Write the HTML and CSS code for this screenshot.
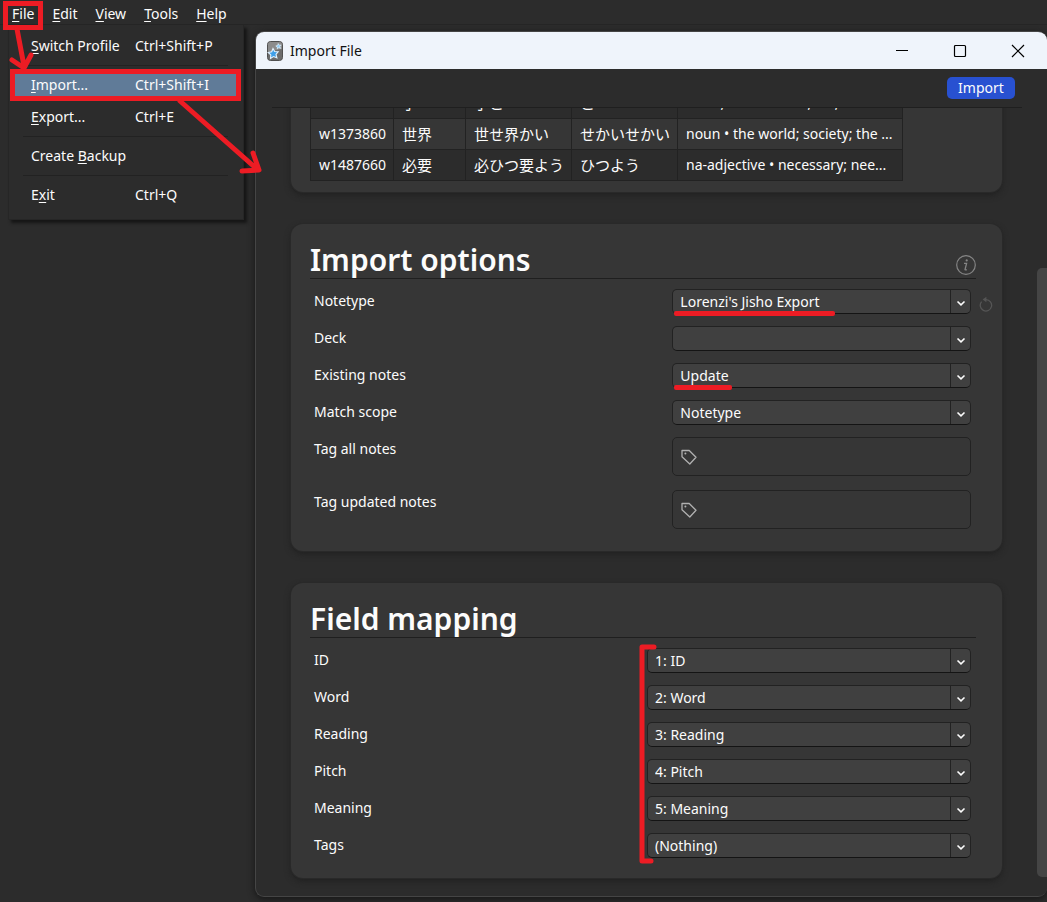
FILE: index.html
```html
<!DOCTYPE html>
<html lang="en">
<head>
<meta charset="utf-8">
<title>Import File</title>
<link rel="stylesheet" href="styles.css">
</head>
<body>
<svg class="defs" aria-hidden="true">
  <symbol id="chevron" viewBox="0 0 10 10"><path d="M1.5 3.5 5 6.8 8.500 3.500" fill="none" stroke="currentColor" stroke-width="1.6"/></symbol>
  <symbol id="tag" viewBox="0 0 16 16"><path d="M1 1.500h7.200L15 8.300 8.800 15 1 7.700z" fill="none" stroke="currentColor" stroke-width="1.300" stroke-linejoin="round"/><circle cx="4.400" cy="4.400" r="1" fill="currentColor"/></symbol>
</svg>

<nav class="menubar">
  <button class="menubar-item is-marked"><u>F</u>ile</button>
  <button class="menubar-item"><u>E</u>dit</button>
  <button class="menubar-item"><u>V</u>iew</button>
  <button class="menubar-item"><u>T</u>ools</button>
  <button class="menubar-item"><u>H</u>elp</button>
</nav>

<div class="file-menu" role="menu">
  <button class="menu-item" role="menuitem"><span><u>S</u>witch Profile</span><span>Ctrl+Shift+P</span></button>
  <hr class="menu-line">
  <button class="menu-item is-active" role="menuitem"><span><u>I</u>mport...</span><span>Ctrl+Shift+I</span></button>
  <button class="menu-item" role="menuitem"><span><u>E</u>xport...</span><span>Ctrl+E</span></button>
  <hr class="menu-line">
  <button class="menu-item" role="menuitem"><span>Create <u>B</u>ackup</span></button>
  <hr class="menu-line">
  <button class="menu-item" role="menuitem"><span>E<u>x</u>it</span><span>Ctrl+Q</span></button>
</div>

<main class="workspace">
  <section class="dialog">
    <header class="titlebar">
      <svg class="app-icon" viewBox="0 0 16 20" aria-hidden="true">
        <rect x=".5" y=".5" width="15" height="19" rx="3" fill="#6c6c6c" stroke="#505050"/>
        <path d="M1 10V3.500Q1 1 3.500 1h9Q15 1 15 3.500V8Q9 8.500 1 12z" fill="#8c8c8c"/>
        <path d="m6 7.500 1.700 3 3.500.2-2.200 2.700.9 3.400-3.400-1.300-3 1.900.3-3.500L1.200 11.500l3.500-.7z" fill="#3f9fe8" stroke="#e4f3ff" stroke-width="1.100"/>
        <path d="m11.200 2.600 1 1.600 1.900-.1-1.200 1.500.7 1.800-1.800-.7-1.500 1.200.1-1.900-1.600-1 1.900-.5z" fill="#8fccf7" stroke="#e4f3ff" stroke-width=".7"/>
      </svg>
      <span class="title">Import File</span>
      <button class="win-button" aria-label="Minimize"><svg viewBox="0 0 14 14"><path d="M1 6.500h12" stroke="#000"/></svg></button>
      <button class="win-button" aria-label="Maximize"><svg viewBox="0 0 14 14"><rect x="1.500" y="1.500" width="11" height="11" rx="1" fill="none" stroke="#000" stroke-width="1.200"/></svg></button>
      <button class="win-button" aria-label="Close"><svg viewBox="0 0 14 14"><path d="m1 1 12 12M13 1 1 13" stroke="#000" stroke-width="1.200"/></svg></button>
    </header>
    <div class="toolbar"><button class="import-button">Import</button></div>

    <div class="content">
      <section class="card preview">
        <table class="notes">
          <colgroup><col class="c-id"><col class="c-word"><col class="c-reading"><col class="c-reading"><col class="c-meaning"></colgroup>
          <tbody>
            <tr><td>w1307770</td><td lang="ja">子</td><td lang="ja">子こ</td><td lang="ja">こ</td><td>noun, suffix • child; kid; teena...</td></tr>
            <tr><td>w1373860</td><td lang="ja">世界</td><td lang="ja">世せ界かい</td><td lang="ja">せかいせかい</td><td>noun • the world; society; the ...</td></tr>
            <tr><td>w1487660</td><td lang="ja">必要</td><td lang="ja">必ひつ要よう</td><td lang="ja">ひつよう</td><td>na-adjective • necessary; nee...</td></tr>
          </tbody>
        </table>
      </section>

      <section class="card">
        <header class="card-head">
          <h1>Import options</h1>
          <button class="info" aria-label="Help"><svg viewBox="0 0 20 20"><circle cx="10" cy="10" r="9.300" fill="none" stroke="currentColor" stroke-width="1.200"/><path d="M8 8.300h2.600L9 14.500q0 .8 1.800.1" fill="none" stroke="currentColor" stroke-width="1.300"/><circle cx="10.700" cy="5.400" r="1.100" fill="currentColor"/></svg></button>
        </header>
        <div class="rows options">
          <div class="row"><label for="notetype">Notetype</label>
            <div class="picker"><select id="notetype"><option>Lorenzi's Jisho Export</option></select><svg class="chevron"><use href="#chevron"/></svg><i class="underline long"></i>
              <button class="revert" aria-label="Revert"><svg viewBox="0 0 14 16"><path d="M7 3.600A5.700 5.700 0 1 1 2.600 5.600" fill="none" stroke="currentColor" stroke-width="1.300"/><path d="M3.600 3.600 7.400.8v5.400z" fill="currentColor"/></svg></button></div></div>
          <div class="row"><label for="deck">Deck</label>
            <div class="picker"><select id="deck"><option></option></select><svg class="chevron"><use href="#chevron"/></svg></div></div>
          <div class="row"><label for="existing">Existing notes</label>
            <div class="picker"><select id="existing"><option>Update</option></select><svg class="chevron"><use href="#chevron"/></svg><i class="underline short"></i></div></div>
          <div class="row"><label for="scope">Match scope</label>
            <div class="picker"><select id="scope"><option>Notetype</option></select><svg class="chevron"><use href="#chevron"/></svg></div></div>
          <div class="row"><label for="tag-all">Tag all notes</label>
            <div class="tags"><svg><use href="#tag"/></svg><input id="tag-all" type="text"></div></div>
          <div class="row"><label for="tag-updated">Tag updated notes</label>
            <div class="tags"><svg><use href="#tag"/></svg><input id="tag-updated" type="text"></div></div>
        </div>
      </section>

      <section class="card">
        <header class="card-head"><h1>Field mapping</h1></header>
        <div class="rows mapping">
          <div class="row"><label for="f-id">ID</label>
            <div class="picker"><select id="f-id"><option>1: ID</option></select><svg class="chevron"><use href="#chevron"/></svg>
              <svg class="bracket" viewBox="0 0 18 220" aria-hidden="true"><path d="M15 3H3v214h9" fill="none" stroke="#ed1c24" stroke-width="5" stroke-linecap="round" stroke-linejoin="round"/></svg></div></div>
          <div class="row"><label for="f-word">Word</label>
            <div class="picker"><select id="f-word"><option>2: Word</option></select><svg class="chevron"><use href="#chevron"/></svg></div></div>
          <div class="row"><label for="f-reading">Reading</label>
            <div class="picker"><select id="f-reading"><option>3: Reading</option></select><svg class="chevron"><use href="#chevron"/></svg></div></div>
          <div class="row"><label for="f-pitch">Pitch</label>
            <div class="picker"><select id="f-pitch"><option>4: Pitch</option></select><svg class="chevron"><use href="#chevron"/></svg></div></div>
          <div class="row"><label for="f-meaning">Meaning</label>
            <div class="picker"><select id="f-meaning"><option>5: Meaning</option></select><svg class="chevron"><use href="#chevron"/></svg></div></div>
          <div class="row"><label for="f-tags">Tags</label>
            <div class="picker"><select id="f-tags"><option>(Nothing)</option></select><svg class="chevron"><use href="#chevron"/></svg></div></div>
        </div>
      </section>
      <div class="scroll-thumb"></div>
    </div>
  </section>
</main>

<svg class="arrows" viewBox="0 0 270 190" aria-hidden="true">
  <g fill="none" stroke="#ed1c24" stroke-width="5" stroke-linecap="round" stroke-linejoin="round">
    <path d="M17 29 24 66M12 60l12 8 7-13"/>
    <path d="M180 101 258 170M253 153l6 17-17 1"/>
  </g>
</svg>
</body>
</html>
```
FILE: styles.css
```css
* { box-sizing: border-box; }

body {
  margin: 0;
  min-height: 100vh;
  display: flex;
  flex-direction: column;
  background: #2c2c2c;
  color: #fcfcfc;
  font: 14px/20px "Noto Sans", "Noto Sans CJK JP", sans-serif;
}

button, input, select { font: inherit; color: inherit; }
button { border: 0; padding: 0; background: none; }
u { text-underline-offset: 2px; }
.defs { display: none; }

/* Main window menu */
.menubar {
  display: flex;
  gap: 18px;
  height: 25px;
  padding: 4px 12px 0;
  border-bottom: 1px solid #262626;
}
.menubar-item { position: relative; height: 20px; }
.menubar-item.is-marked::after {
  content: "";
  position: absolute;
  inset: -3px -9px -6px -9px;
  border: 5px solid #ed1c24;
  z-index: 3;
}

.file-menu {
  position: absolute;
  top: 25px;
  left: 8px;
  z-index: 2;
  width: 236px;
  padding: 5px 2px 8px 1px;
  background: #2c2c2c;
  border: solid #262626;
  border-width: 0 1px 1px;
  box-shadow: 3px 3px 3px #151515;
}
.menu-item {
  position: relative;
  display: grid;
  grid-template-columns: 104px 1fr;
  align-items: center;
  width: 100%;
  height: 32px;
  padding: 0 21px;
  text-align: left;
}
.menu-item.is-active { background: #607b98; }
.menu-item.is-active::after {
  content: "";
  position: absolute;
  inset: 0;
  border: 5px solid #ed1c24;
}
.menu-line { height: 1px; margin: 3px 13px; border: 0; background: #222; }

/* Dialog window */
.workspace {
  flex: 1;
  display: flex;
  padding: 6px 0 5px 255px;
}
.dialog {
  flex: 1;
  display: flex;
  flex-direction: column;
  overflow: hidden;
  background: #2c2c2c;
  border: solid #454545;
  border-width: 1px 0 1px 1px;
  border-radius: 9px;
  box-shadow: 0 2px 7px #161616;
}
.titlebar {
  display: flex;
  align-items: center;
  height: 37px;
  padding: 0 22px 0 11px;
  background: #eff4fb;
  color: #111;
}
.app-icon { width: 16px; height: 20px; margin-right: 7px; }
.title { flex: 1; }
.win-button { width: 14px; height: 14px; margin-left: 44px; }
.win-button svg { display: block; }

.toolbar {
  display: flex;
  justify-content: flex-end;
  align-items: center;
  height: 39px;
  margin: 0 25px 0 16px;
  padding-right: 7px;
  border-bottom: 1px solid #1f1f1f;
}
.import-button {
  width: 68px;
  height: 22px;
  border-radius: 5px;
  background: #2851d1;
}

.content {
  position: relative;
  flex: 1;
  display: flex;
  flex-direction: column;
  gap: 32px;
  overflow: hidden;
  padding: 0 45px 18px 35px;
}
.scroll-thumb {
  position: absolute;
  top: 160px;
  right: 0;
  bottom: 19px;
  width: 10px;
  border-radius: 5px 0 0 5px;
  background: #454545;
}

.card {
  background: #363636;
  border-radius: 12px;
  box-shadow: 0 0 0 1px #292929, 0 3px 6px #202020;
  padding: 19px 26px 20px 19px;
}
/* Scrolled so that the top of the preview is hidden */
.preview { margin-top: -21px; padding: 0 0 11px 19px; }

.notes { table-layout: fixed; width: 592px; border-collapse: collapse; }
.c-id { width: 83px; }
.c-word { width: 72px; }
.c-reading { width: 106px; }
.c-meaning { width: 225px; }
.notes td {
  height: 31px;
  padding: 0 0 0 8px;
  border: 1px solid #222;
  white-space: nowrap;
}
.notes td[lang="ja"] { font-family: "Noto Sans CJK JP", sans-serif; font-size: 15px; }
.notes tr:nth-child(odd) { background: #2c2c2c; }

.card-head {
  display: flex;
  justify-content: space-between;
  align-items: flex-end;
  height: 36px;
  border-bottom: 1px solid #1f1f1f;
}
h1 { margin: 0; font-size: 30px; line-height: 36px; font-weight: 600; }
.info { width: 20px; height: 20px; margin-bottom: 3px; color: #858585; }
.info svg { display: block; }

.rows { display: grid; gap: 12px; padding: 10px 5px 0 4px; }
.options .row { display: grid; grid-template-columns: 6fr 5fr; }
.mapping .row { display: grid; grid-template-columns: 37fr 36fr; }
.row label { line-height: 24px; }

.picker { position: relative; height: 25px; }
.picker select {
  display: block;
  appearance: none;
  width: 100%;
  height: 25px;
  padding: 0 28px 0 7px;
  border: 1px solid #222;
  border-bottom-color: #141414;
  border-radius: 5px;
  background: linear-gradient(90deg, transparent calc(100% - 20px), #222 calc(100% - 20px), #222 calc(100% - 19px), transparent calc(100% - 19px)), #404040;
}
.chevron {
  position: absolute;
  top: 9px;
  right: 5px;
  width: 10px;
  height: 10px;
  pointer-events: none;
}
.revert { position: absolute; top: 7px; right: -22px; width: 14px; height: 16px; color: #555; }
.revert svg { display: block; }

.tags {
  display: flex;
  align-items: center;
  gap: 8px;
  height: 39px;
  margin-bottom: 2px;
  padding: 0 8px;
  border: 1px solid #222;
  border-radius: 5px;
}
.tags svg { width: 16px; height: 16px; color: #b0b0b0; }
.tags input { flex: 1; border: 0; background: none; outline: none; }

/* Red callouts */
.underline {
  position: absolute;
  top: 22px;
  left: 2px;
  height: 5px;
  border-radius: 2px;
  background: #ed1c24;
}
.underline.long { width: 161px; }
.underline.short { width: 58px; }
.bracket { position: absolute; top: -4px; left: -8px; width: 18px; height: 220px; }
.arrows { position: absolute; top: 0; left: 0; z-index: 4; width: 270px; height: 190px; pointer-events: none; }
```
